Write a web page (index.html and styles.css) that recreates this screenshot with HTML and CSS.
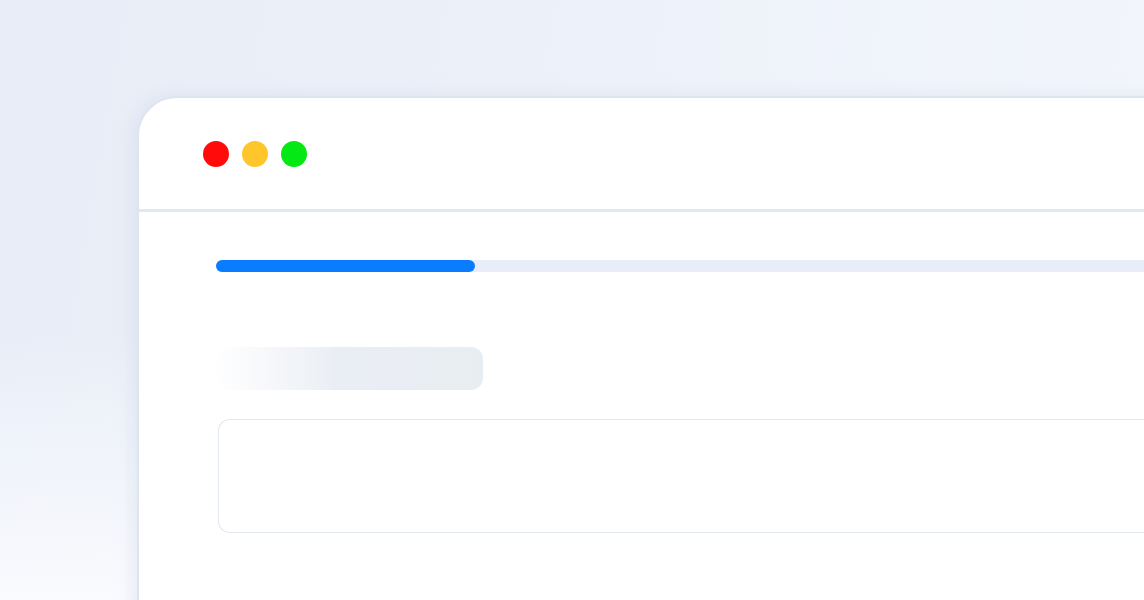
FILE: index.html
```html
<!DOCTYPE html>
<html lang="en">
<head>
<meta charset="utf-8">
<title>Loading</title>
<link rel="stylesheet" href="styles.css">
</head>
<body>
<div class="stage">
  <div class="window">
    <div class="titlebar">
      <span class="dot dot-red"></span>
      <span class="dot dot-yellow"></span>
      <span class="dot dot-green"></span>
    </div>
    <div class="content">
      <div class="progress"><div class="progress-fill" style="width: 259px"></div></div>
      <div class="skeleton"></div>
      <div class="input-box"></div>
    </div>
  </div>
</div>
</body>
</html>
```

FILE: styles.css
```css
html, body {
  margin: 0;
  padding: 0;
  width: 1144px;
  height: 600px;
  overflow: hidden;
  font-family: "Inter", "Liberation Sans", sans-serif;
}

.stage {
  width: 1144px;
  height: 600px;
  box-sizing: border-box;
  padding: 96px 0 0 137px;
  overflow: hidden;
  background:
    linear-gradient(180deg, rgba(255,255,255,0) 55%, rgba(250,251,254,0.95) 100%),
    linear-gradient(100deg, #e8edf7 0%, #edf1f9 50%, #f3f6fc 100%);
}

.window {
  width: 1100px;
  height: 620px;
  background: #ffffff;
  border: 2px solid #dfe5ee;
  border-radius: 40px 0 0 0;
  box-shadow: -4px 0 16px rgba(180, 195, 225, 0.25);
  box-sizing: border-box;
}

.titlebar {
  height: 114px;
  box-sizing: border-box;
  border-bottom: 3px solid #e2e8f0;
  display: flex;
  align-items: center;
  gap: 13px;
  padding-left: 64px;
}

.dot {
  width: 26px;
  height: 26px;
  border-radius: 50%;
  display: block;
}
.dot-red { background: #ff0b0b; }
.dot-yellow { background: #fec62a; }
.dot-green { background: #04e814; }

.content {
  padding: 48px 0 0 77px;
  display: flex;
  flex-direction: column;
}

.progress {
  height: 12px;
  background: #e8eef9;
  border-radius: 6px 0 0 6px;
}
.progress-fill {
  height: 12px;
  background: #0a7cff;
  border-radius: 6px;
}

.skeleton {
  margin-top: 75px;
  width: 267px;
  height: 43px;
  border-radius: 12px;
  background: linear-gradient(90deg, rgba(232,237,242,0) 0%, #eaeef4 45%, #e8edf2 100%);
}

.input-box {
  margin-top: 29px;
  margin-left: 2px;
  height: 114px;
  box-sizing: border-box;
  border: 1.5px solid #e2e8f0;
  border-right: none;
  border-radius: 12px 0 0 12px;
}
```
